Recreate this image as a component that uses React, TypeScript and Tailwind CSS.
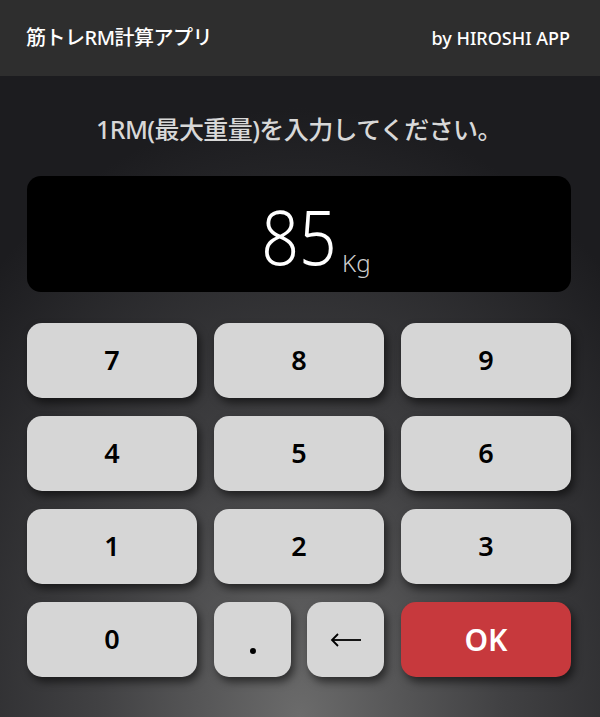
import React from "react";

const font = { fontFamily: '"Noto Sans", "Noto Sans CJK JP", sans-serif' };

function Key({ label }: { label: string }) {
  return (
    <div className="h-[75px] rounded-[15px] bg-[#d6d6d6] shadow-[3px_5px_8px_rgba(0,0,0,0.55)] flex items-center justify-center text-[27px] font-semibold text-black">
      {label}
    </div>
  );
}

export default function App() {
  return (
    <div
      className="w-[600px] h-[717px] overflow-hidden flex flex-col text-white"
      style={font}
    >
      <div className="h-[76px] shrink-0 bg-[#2e2e2e] flex items-center justify-between pl-[26px] pr-[30px]">
        <span className="text-[20px] font-medium tracking-[-0.5px]">筋トレRM計算アプリ</span>
        <span className="text-[18px] font-medium">by HIROSHI APP</span>
      </div>
      <div className="flex-1 pl-[27px] pr-[29px] bg-[radial-gradient(ellipse_75%_95%_at_50%_100%,#6b6b6b_0%,#414143_45%,#1c1c1f_100%)]">
        <div className="pt-[37px] text-center text-[25px] leading-[32px] text-[#d8d8d8] font-medium tracking-[-0.6px]">
          1RM(最大重量)を入力してください。
        </div>
        <div className="mt-[31px] h-[116px] rounded-[14px] bg-black flex items-end justify-center pb-[18px] pl-[24px]">
          <span className="inline-block text-[75px] leading-[75px] font-light text-white scale-x-[0.88] origin-right">85</span>
          <span className="ml-[5px] text-[24px] leading-[24px] font-light text-[#cfcfcf] mb-[-1px]">Kg</span>
        </div>
        <div className="mt-[31px] grid grid-cols-3 gap-x-[17px] gap-y-[18px]">
          <Key label="7" />
          <Key label="8" />
          <Key label="9" />
          <Key label="4" />
          <Key label="5" />
          <Key label="6" />
          <Key label="1" />
          <Key label="2" />
          <Key label="3" />
          <Key label="0" />
          <div className="grid grid-cols-2 gap-x-[16px]">
            <div className="h-[75px] rounded-[15px] bg-[#d6d6d6] shadow-[3px_5px_8px_rgba(0,0,0,0.55)] flex items-end justify-center pb-[23px]">
              <span className="w-[6px] h-[6px] rounded-full bg-black" />
            </div>
            <div className="h-[75px] rounded-[15px] bg-[#d6d6d6] shadow-[3px_5px_8px_rgba(0,0,0,0.55)] flex items-center justify-center">
              <svg width="32" height="14" viewBox="0 0 32 14" fill="none" stroke="black" strokeWidth="1.8">
                <path d="M31 7H2" />
                <path d="M8 1L2 7L8 13" />
              </svg>
            </div>
          </div>
          <div className="h-[75px] rounded-[15px] bg-[#c7393d] shadow-[3px_5px_8px_rgba(0,0,0,0.55)] flex items-center justify-center text-[30px] font-semibold text-white">
            OK
          </div>
        </div>
      </div>
    </div>
  );
}
